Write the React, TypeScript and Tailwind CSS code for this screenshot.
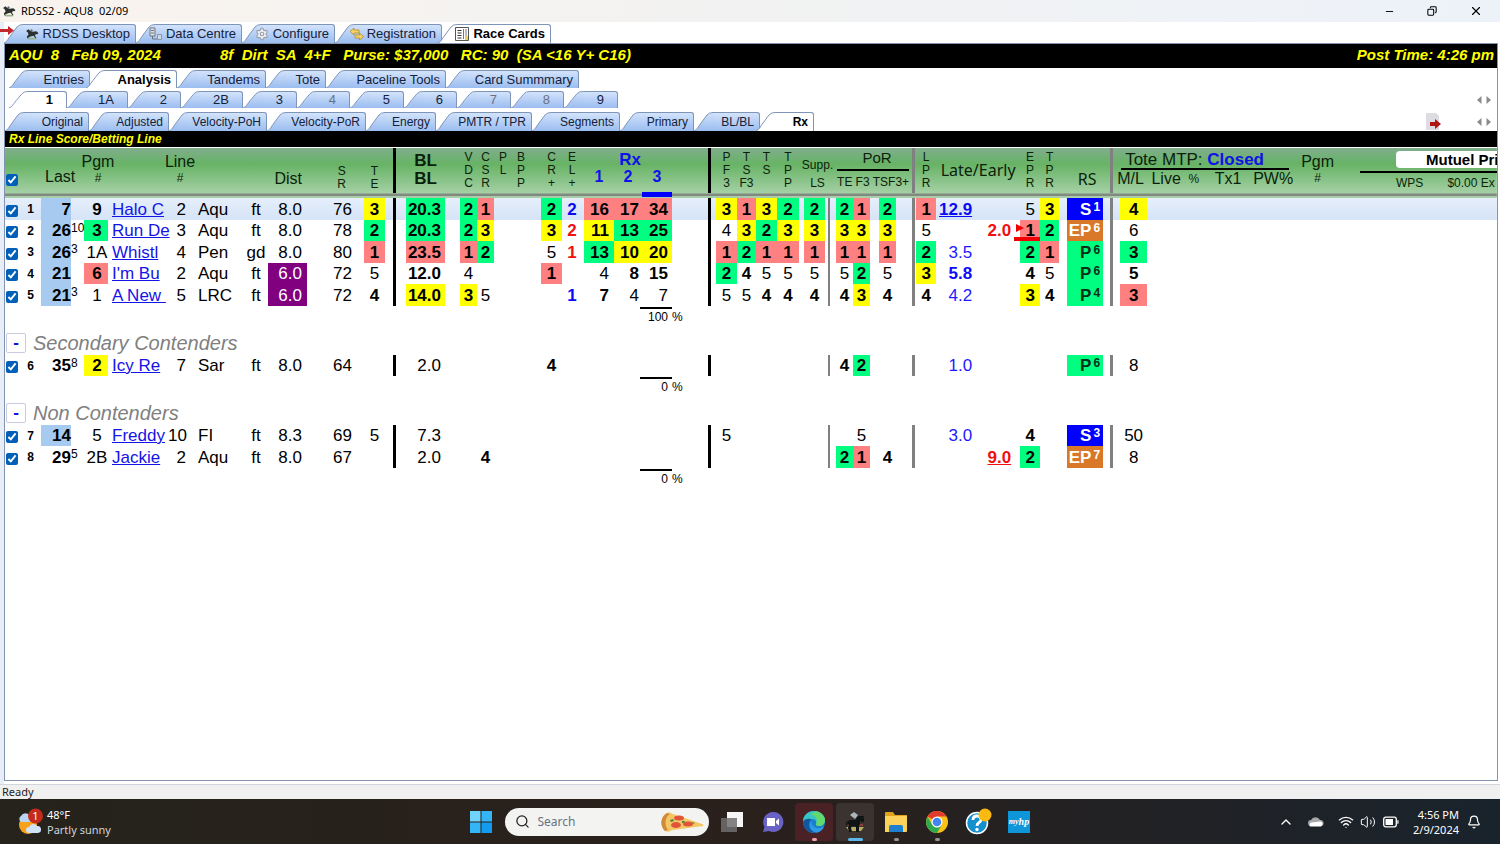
import React from 'react';
import { FaHorse } from 'react-icons/fa';
import { Bell, ChevronUp, Copy, Minus, Search, Settings, Volume2, Wifi, X } from 'lucide-react';

/* ---------- tabs ---------- */

interface TabItem {
  label: string;
  width: string;
  icon?: React.ReactNode;
  muted?: boolean;
}

interface TabProps extends TabItem {
  selected: boolean;
  look: string;
}

const Tab: React.FC<TabProps> = ({ label, width, icon, muted, selected, look }) => {
  return (
    <button
      role="tab"
      aria-selected={selected}
      className={`relative flex h-full shrink-0 ${width} ${
        selected ? 'z-10 -ml-1 first:ml-0' : ''
      }`}
    >
      <svg viewBox="0 0 20 19" preserveAspectRatio="none" className="h-full w-5 shrink-0">
        <defs>
          <linearGradient id="tabFill" x1="0" y1="0" x2="0" y2="19" gradientUnits="userSpaceOnUse">
            <stop offset="0" stopColor="#d3e3fb" />
            <stop offset="1" stopColor="#9bbdf0" />
          </linearGradient>
        </defs>
        <path
          d="M0 19 C3 18 4 15 7 11 L13 3 Q15 .5 19 .5 L20 .5 V19 Z"
          fill={selected ? '#ffffff' : 'url(#tabFill)'}
        />
        <path
          d="M0 19 C3 18 4 15 7 11 L13 3 Q15 .5 19 .5 L20 .5"
          fill="none"
          stroke="#7f95b8"
        />
      </svg>
      <span
        className={`flex h-full min-w-0 grow items-center justify-end gap-[2px] rounded-tr-[3px] border-t border-r border-[#7f95b8] whitespace-nowrap ${look} ${
          selected ? 'bg-white font-bold text-black' : 'bg-linear-to-b from-[#d3e3fb] to-[#9bbdf0]'
        } ${muted ? 'text-gray-500' : ''}`}
      >
        {icon && <span className="shrink-0">{icon}</span>}
        {label}
      </span>
    </button>
  );
};

interface TabRowProps {
  items: TabItem[];
  active: string;
  look: string;
  className: string;
  children?: React.ReactNode;
}

const TabRow: React.FC<TabRowProps> = ({ items, active, look, className, children }) => {
  return (
    <div role="tablist" className={`flex overflow-hidden text-[#14213a] ${className}`}>
      {items.map((item) => (
        <Tab key={item.label} {...item} selected={item.label === active} look={look} />
      ))}
      {children}
    </div>
  );
};

const ScrollArrows = () => {
  return (
    <svg viewBox="0 0 14 8" className="h-2 w-3.5" fill="#8b8b8b">
      <path d="M4.500 0v8L0 4z" />
      <path d="M9.500 0v8L14 4z" />
    </svg>
  );
};

const HorseIcon = ({ className }: { className: string }) => {
  return (
    <svg viewBox="0 0 16 14" className={className}>
      <path d="M3 11.500h11l-2 2H4z" fill="#9db58a" />
      <path
        d="M1 3.500 4 1.500l2 2 3 .8 4-.5 2.500 2-1 1.500-2-.3-1 2 1.500 2.500-1 .5-2-3-3 .5-3.500 1.500.5 1-1.300.2L2 10l2-2.500L3 5z"
        fill="#2c302f"
      />
      <path d="M5.500 2.500l2-1 1.500 1-1 1.500z" fill="#5c6b78" />
    </svg>
  );
};

const DataIcon = () => {
  return (
    <svg viewBox="0 0 16 14" className="h-3.5 w-4">
      <path d="M2 1h5v8H2z" fill="#dfe3e8" stroke="#6c7681" />
      <path d="M3 3.500h3M3 6h3" stroke="#6c7681" />
      <path d="M4.500 9v3H9" fill="none" stroke="#6c7681" />
      <path d="M9.500 7.500h4v5h-4z" fill="#cfd9e6" stroke="#8a97a5" />
    </svg>
  );
};

const KeyIcon = () => {
  return (
    <svg viewBox="0 0 16 14" className="h-3.5 w-4">
      <path
        d="M1 4.500 5 1v2h5v3H5v2zM14.500 9.500l-4-3.500v2H6v3h4.500v2z"
        fill="#f6d36b"
        stroke="#b88a1c"
        strokeWidth=".8"
      />
    </svg>
  );
};

const CardsIcon = () => {
  return (
    <svg viewBox="0 0 14 14" className="mr-[2px] h-3.5 w-3.5">
      <path d="M.5.5h13v13H.5z" fill="#fff" stroke="#555" />
      <path d="M2.500 3.500h4M2.500 6h4M2.500 8.500h4M2.500 11h4" stroke="#333" />
      <path d="M8.500 2v10M11 2v7" stroke="#777" />
      <path d="M10 9h3v4h-3z" fill="#e7cf6a" />
    </svg>
  );
};

const MainTabs: TabItem[] = [
  { label: 'RDSS Desktop', width: 'w-[132px]', icon: <HorseIcon className="mr-[2px] h-3 w-3.5" /> },
  { label: 'Data Centre', width: 'w-[106px]', icon: <DataIcon /> },
  {
    label: 'Configure',
    width: 'w-[93px]',
    icon: <Settings size={14} fill="#f1f1f1" className="mr-[2px] text-gray-400" />,
  },
  { label: 'Registration', width: 'w-[107px]', icon: <KeyIcon /> },
  { label: 'Race Cards', width: 'w-[113px]', icon: <CardsIcon /> },
];

const SectionTabs: TabItem[] = [
  { label: 'Entries', width: 'w-[81px]' },
  { label: 'Analysis', width: 'w-[91px]' },
  { label: 'Tandems', width: 'w-[89px]' },
  { label: 'Tote', width: 'w-[60px]' },
  { label: 'Paceline Tools', width: 'w-[120px]' },
  { label: 'Card Summmary', width: 'w-[133px]' },
];

const HorseTabs: TabItem[] = [
  { label: '1', width: 'w-[58px]' },
  { label: '1A', width: 'w-[61px]' },
  { label: '2', width: 'w-[53px]' },
  { label: '2B', width: 'w-[62px]' },
  { label: '3', width: 'w-[54px]' },
  { label: '4', width: 'w-[53px]', muted: true },
  { label: '5', width: 'w-[54px]' },
  { label: '6', width: 'w-[53px]' },
  { label: '7', width: 'w-[54px]', muted: true },
  { label: '8', width: 'w-[53px]', muted: true },
  { label: '9', width: 'w-[54px]' },
];

const ViewTabs: TabItem[] = [
  { label: 'Original', width: 'w-[84px]' },
  { label: 'Adjusted', width: 'w-[80px]' },
  { label: 'Velocity-PoH', width: 'w-[98px]' },
  { label: 'Velocity-PoR', width: 'w-[99px]' },
  { label: 'Energy', width: 'w-[70px]' },
  { label: 'PMTR / TPR', width: 'w-[96px]' },
  { label: 'Segments', width: 'w-[88px]' },
  { label: 'Primary', width: 'w-[74px]' },
  { label: 'BL/BL', width: 'w-[66px]' },
  { label: 'Rx', width: 'w-[58px]' },
];

/* ---------- table data ---------- */

interface Mark {
  v: string;
  cls: string;
}
type Cell = string | Mark;

const b = (v: string): Mark => ({ v, cls: 'font-bold' });
const y = (v: string): Mark => ({ v, cls: 'font-bold bg-[#ffff00]' });
const g = (v: string): Mark => ({ v, cls: 'font-bold bg-[#00ff80]' });
const r = (v: string): Mark => ({ v, cls: 'font-bold bg-[#ff8080]' });
const blue = (v: string): Mark => ({ v, cls: 'text-[#1a1aff]' });
const boldBlue = (v: string): Mark => ({ v, cls: 'font-bold text-[#0a0af5]' });
const red = (v: string): Mark => ({ v, cls: 'font-bold text-[#f01010]' });
const recent = (v: string): Mark => ({ v, cls: 'font-bold bg-[#a6caf0]' });
const sprint = (v: string): Mark => ({ v, cls: 'bg-[#800080] text-white' });

interface Horse {
  n: string;
  name: string;
  rs: [string, string];
  cells: Record<string, Cell>;
}

const Contenders: Horse[] = [
  {
    n: '1',
    name: 'Halo C',
    rs: ['S', '1'],
    cells: {
      last: recent('7'), pgm: b('9'), line: '2', track: 'Aqu', cond: 'ft', dist: '8.0', sr: '76', te: y('3'),
      bl: g('20.3'), vdc: g('2'), csr: r('1'), cr: g('2'), el: boldBlue('2'),
      rx1: r('16'), rx2: r('17'), rx3: r('34'),
      pf3: y('3'), tsf3: r('1'), ts: y('3'), tpp: g('2'), supp: g('2'),
      porTe: g('2'), porF3: r('1'), porTs: g('2'), lpr: r('1'),
      late: { v: '12.9', cls: 'font-bold text-[#0a0af5] underline' },
      epr: '5', tpr: y('3'), ml: y('4'),
    },
  },
  {
    n: '2',
    name: 'Run De',
    rs: ['EP', '6'],
    cells: {
      last: recent('26'), sup: '10', pgm: g('3'), line: '3', track: 'Aqu', cond: 'ft', dist: '8.0', sr: '78', te: g('2'),
      bl: g('20.3'), vdc: g('2'), csr: y('3'), cr: y('3'), el: red('2'),
      rx1: y('11'), rx2: g('13'), rx3: g('25'),
      pf3: '4', tsf3: y('3'), ts: g('2'), tpp: y('3'), supp: y('3'),
      porTe: y('3'), porF3: y('3'), porTs: y('3'), lpr: '5', early: red('2.0'),
      epr: r('1'), tpr: g('2'), ml: '6',
    },
  },
  {
    n: '3',
    name: 'Whistl',
    rs: ['P', '6'],
    cells: {
      last: recent('26'), sup: '3', pgm: '1A', line: '4', track: 'Pen', cond: 'gd', dist: '8.0', sr: '80', te: r('1'),
      bl: r('23.5'), vdc: r('1'), csr: g('2'), cr: '5', el: red('1'),
      rx1: g('13'), rx2: y('10'), rx3: y('20'),
      pf3: r('1'), tsf3: g('2'), ts: r('1'), tpp: r('1'), supp: r('1'),
      porTe: r('1'), porF3: r('1'), porTs: r('1'), lpr: g('2'), late: blue('3.5'),
      epr: g('2'), tpr: r('1'), ml: g('3'),
    },
  },
  {
    n: '4',
    name: "I'm Bu",
    rs: ['P', '6'],
    cells: {
      last: recent('21'), pgm: r('6'), line: '2', track: 'Aqu', cond: 'ft', dist: sprint('6.0'), sr: '72', te: '5',
      bl: b('12.0'), vdc: '4', cr: r('1'),
      rx1: '4', rx2: b('8'), rx3: b('15'),
      pf3: g('2'), tsf3: b('4'), ts: '5', tpp: '5', supp: '5',
      porTe: '5', porF3: g('2'), porTs: '5', lpr: y('3'), late: boldBlue('5.8'),
      epr: b('4'), tpr: '5', ml: b('5'),
    },
  },
  {
    n: '5',
    name: 'A New ',
    rs: ['P', '4'],
    cells: {
      last: recent('21'), sup: '3', pgm: '1', line: '5', track: 'LRC', cond: 'ft', dist: sprint('6.0'), sr: '72', te: b('4'),
      bl: y('14.0'), vdc: y('3'), csr: '5', el: boldBlue('1'),
      rx1: b('7'), rx2: '4', rx3: '7',
      pf3: '5', tsf3: '5', ts: b('4'), tpp: b('4'), supp: b('4'),
      porTe: b('4'), porF3: y('3'), porTs: b('4'), lpr: b('4'), late: blue('4.2'),
      epr: y('3'), tpr: b('4'), ml: r('3'),
    },
  },
];

const Secondary: Horse[] = [
  {
    n: '6',
    name: 'Icy Re',
    rs: ['P', '6'],
    cells: {
      last: b('35'), sup: '8', pgm: y('2'), line: '7', track: 'Sar', cond: 'ft', dist: '8.0', sr: '64',
      bl: '2.0', cr: b('4'), porTe: b('4'), porF3: g('2'), late: blue('1.0'), ml: '8',
    },
  },
];

const NonContenders: Horse[] = [
  {
    n: '7',
    name: 'Freddy',
    rs: ['S', '3'],
    cells: {
      last: recent('14'), pgm: '5', line: '10', track: 'FI', cond: 'ft', dist: '8.3', sr: '69', te: '5',
      bl: '7.3', pf3: '5', porF3: '5', late: blue('3.0'), epr: b('4'), ml: '50',
    },
  },
  {
    n: '8',
    name: 'Jackie',
    rs: ['EP', '7'],
    cells: {
      last: b('29'), sup: '5', pgm: '2B', line: '2', track: 'Aqu', cond: 'ft', dist: '8.0', sr: '67',
      bl: '2.0', csr: b('4'), porTe: g('2'), porF3: r('1'), porTs: b('4'),
      early: { v: '9.0', cls: 'font-bold text-[#f01010] underline' },
      epr: g('2'), ml: '8',
    },
  },
];

// one entry per table column, "gap" and "bar" columns carry no data
interface Column {
  key: string;
  w: string;
  cls?: string;
}

const Columns: Column[] = [
  { key: 'check', w: 'w-[15px]' },
  { key: 'n', w: 'w-[21px]' },
  { key: 'last', w: 'w-[30px]', cls: 'text-right' },
  { key: 'sup', w: 'w-[13px]', cls: 'align-top text-xs' },
  { key: 'pgm', w: 'w-[24px]', cls: 'text-center pl-[2px]' },
  { key: 'name', w: 'w-[60px]', cls: 'pl-1' },
  { key: 'line', w: 'w-[20px]', cls: 'text-right pr-[2px]' },
  { key: 'track', w: 'w-[58px]', cls: 'pl-[10px]' },
  { key: 'cond', w: 'w-[22px]', cls: 'text-center pr-[2px]' },
  { key: 'dist', w: 'w-[39px]', cls: 'text-right pr-[5px]' },
  { key: 'sr', w: 'w-[57px]', cls: 'text-right pr-3' },
  { key: 'te', w: 'w-[21px]', cls: 'text-center' },
  { key: 'gap', w: 'w-[8px]' },
  { key: 'bar', w: 'w-[3px]', cls: 'bg-black' },
  { key: 'gap', w: 'w-[10px]' },
  { key: 'bl', w: 'w-[39px]', cls: 'text-right pr-1' },
  { key: 'gap', w: 'w-[15px]' },
  { key: 'vdc', w: 'w-[17px]', cls: 'text-center' },
  { key: 'csr', w: 'w-[17px]', cls: 'text-center' },
  { key: 'pl', w: 'w-[18px]' },
  { key: 'bpp', w: 'w-[18px]' },
  { key: 'gap', w: 'w-[11px]' },
  { key: 'cr', w: 'w-[21px]', cls: 'text-center' },
  { key: 'el', w: 'w-[20px]', cls: 'text-center' },
  { key: 'gap', w: 'w-[2px]' },
  { key: 'rx1', w: 'w-[30px]', cls: 'text-right pr-[5px]' },
  { key: 'rx2', w: 'w-[28px]', cls: 'text-right pr-[3px]' },
  { key: 'rx3', w: 'w-[30px]', cls: 'text-right pr-1' },
  { key: 'gap', w: 'w-[36px]' },
  { key: 'bar', w: 'w-[3px]', cls: 'bg-black' },
  { key: 'gap', w: 'w-[5px]' },
  { key: 'pf3', w: 'w-[21px]', cls: 'text-center' },
  { key: 'tsf3', w: 'w-[19px]', cls: 'text-center' },
  { key: 'ts', w: 'w-[21px]', cls: 'text-center' },
  { key: 'tpp', w: 'w-[22px]', cls: 'text-center' },
  { key: 'gap', w: 'w-[5px]' },
  { key: 'supp', w: 'w-[21px]', cls: 'text-center' },
  { key: 'gap', w: 'w-[3px]' },
  { key: 'bar', w: 'w-[2px]', cls: 'bg-[#808080]' },
  { key: 'gap', w: 'w-[6px]' },
  { key: 'porTe', w: 'w-[17px]', cls: 'text-center' },
  { key: 'porF3', w: 'w-[17px]', cls: 'text-center' },
  { key: 'gap', w: 'w-[9px]' },
  { key: 'porTs', w: 'w-[17px]', cls: 'text-center' },
  { key: 'gap', w: 'w-[16px]' },
  { key: 'bar', w: 'w-[3px]', cls: 'bg-[#808080]' },
  { key: 'gap', w: 'w-[1px]' },
  { key: 'lpr', w: 'w-[20px]', cls: 'text-center' },
  { key: 'late', w: 'w-[40px]', cls: 'text-right pr-1' },
  { key: 'early', w: 'w-[44px]', cls: 'text-right pr-[9px]' },
  { key: 'epr', w: 'w-[20px]', cls: 'text-center' },
  { key: 'tpr', w: 'w-[19px]', cls: 'text-center' },
  { key: 'gap', w: 'w-[8px]' },
  { key: 'rs', w: 'w-[36px]' },
  { key: 'gap', w: 'w-[7px]' },
  { key: 'bar', w: 'w-[3px]', cls: 'bg-[#808080]' },
  { key: 'gap', w: 'w-[7px]' },
  { key: 'ml', w: 'w-[27px]', cls: 'text-center' },
  { key: 'gap', w: '' },
];

const StyleColors: Record<string, string> = {
  S: 'bg-[#0000ff] text-white',
  EP: 'bg-[#d87828] text-white',
  P: 'bg-[#00ff80] text-[#06301a]',
};

const HorseRow = ({ horse, first }: { horse: Horse; first?: boolean }) => {
  return (
    <tr
      className={`h-[22px] even:h-[21px] ${first ? 'bg-linear-to-b from-[#e6effb] to-[#d5e4f7]' : ''}`}
    >
      {Columns.map((col, index) => {
        if (col.key === 'check') {
          return (
            <td key={index}>
              <input
                type="checkbox"
                defaultChecked
                aria-label={horse.name.trim()}
                className="mt-[3px] ml-px block h-3 w-3 accent-[#005fb8]"
              />
            </td>
          );
        }
        if (col.key === 'n') {
          return (
            <td key={index} className="text-center text-xs leading-5 font-bold">
              {horse.n}
            </td>
          );
        }
        if (col.key === 'name') {
          return (
            <td key={index} className={col.cls}>
              <a href="#" className="whitespace-pre text-[#1414e6] underline">
                {horse.name}
              </a>
            </td>
          );
        }
        if (col.key === 'rs') {
          return (
            <td
              key={index}
              className={`pr-[3px] text-right font-bold whitespace-nowrap ${StyleColors[horse.rs[0]]}`}
            >
              {horse.rs[0]}
              <span className="ml-[2px] inline-block align-top text-xs leading-4">{horse.rs[1]}</span>
            </td>
          );
        }
        const cell = horse.cells[col.key];
        const value = typeof cell === 'string' ? cell : cell?.v;
        const mark = typeof cell === 'object' ? cell.cls : '';
        return (
          <td key={index} className={`${col.cls ?? ''} ${mark}`}>
            {col.key === 'epr' && horse.n === '2' ? (
              // red flag on the early speed leader
              <div className="relative">
                {value}
                <svg viewBox="0 0 8 8" className="absolute top-1 -left-1 h-2 w-2" fill="#f00000">
                  <path d="M0 0l8 4-8 4z" />
                </svg>
                <div className="absolute bottom-0 -left-1.5 h-1 w-[26px] bg-[#f00000]" />
              </div>
            ) : (
              value
            )}
          </td>
        );
      })}
    </tr>
  );
};

const TotalRow = ({ total }: { total: string }) => {
  return (
    <tr className="h-[25px]">
      <td colSpan={27} />
      <td colSpan={2} className="pt-px align-top text-xs leading-[17px]">
        <div className="-ml-[2px] flex">
          <span className="w-8 border-t-2 border-black pr-1 text-right">{total}</span>
          <span className="pt-[2px]">%</span>
        </div>
      </td>
      <td colSpan={30} />
    </tr>
  );
};

const GroupRow = ({ title }: { title: string }) => {
  return (
    <tr className="h-6">
      <td colSpan={59}>
        <div className="flex items-center gap-[7px] pl-px">
          <button className="h-5 w-5 rounded-xs border border-[#c8cce0] bg-white text-center leading-4 font-bold text-[#1010f0]">
            -
          </button>
          <h2 className="text-xl leading-6 text-[#808080] italic">{title}</h2>
        </div>
      </td>
    </tr>
  );
};

/* ---------- table heading ---------- */

const Stack = ({ text, low }: { text: string[]; low?: boolean }) => {
  return (
    <div className={`flex flex-col items-center text-xs leading-[13px] ${low ? 'pt-[17px]' : 'pt-[3px]'}`}>
      {text.map((t, index) => (
        <span key={index}>{t}</span>
      ))}
    </div>
  );
};

const Numbered = ({ text }: { text: string }) => {
  return (
    <div className="flex flex-col items-center pt-[6px] text-base leading-4">
      <span>{text}</span>
      <span className="text-xs leading-4">#</span>
    </div>
  );
};

const Divider = ({ color }: { color: string }) => {
  return (
    <th>
      <div className={`h-[45px] ${color}`} />
    </th>
  );
};

const TableHead = () => {
  return (
    <thead>
      <tr className="h-[50px] bg-[linear-gradient(to_bottom,#80ad8c_0px,#67b365_16px,#a5d0a5_45px,#808a80_46px,#808a80_48px,#a9cda9_48px,#a9cda9_50px)] align-top text-[#0b1f0b] [&>th]:p-0 [&>th]:font-normal">
        <th colSpan={2}>
          <input
            type="checkbox"
            defaultChecked
            aria-label="Select all"
            className="mt-[26px] ml-px block h-3 w-3 accent-[#005fb8]"
          />
        </th>
        <th colSpan={2} className="text-left">
          <div className="pt-[21px] pl-1 text-base leading-4">Last</div>
        </th>
        <th>
          <div className="-mr-1">
            <Numbered text="Pgm" />
          </div>
        </th>
        <th />
        <th>
          <div className="pl-1">
            <Numbered text="Line" />
          </div>
        </th>
        <th colSpan={2} />
        <th>
          <div className="pt-[23px] pr-[5px] text-right text-base leading-4">Dist</div>
        </th>
        <th>
          <div className="flex justify-end pr-[18px]">
            <Stack text={['S', 'R']} low />
          </div>
        </th>
        <th>
          <Stack text={['T', 'E']} low />
        </th>
        <th />
        <Divider color="bg-black" />
        <th />
        <th>
          <div className="pt-1 text-center leading-[18px] font-bold">
            BL
            <br />
            BL
          </div>
        </th>
        <th />
        <th><Stack text={['V', 'D', 'C']} /></th>
        <th><Stack text={['C', 'S', 'R']} /></th>
        <th><Stack text={['P', 'L']} /></th>
        <th><Stack text={['B', 'P', 'P']} /></th>
        <th />
        <th><Stack text={['C', 'R', '+']} /></th>
        <th><Stack text={['E', 'L', '+']} /></th>
        <th />
        <th colSpan={3}>
          <div className="pt-[3px] text-center font-bold text-[#1010e8]">
            <div className="pl-1 leading-[17px]">Rx</div>
            <div className="flex text-base leading-[18px]">
              <span className="w-[30px]">1</span>
              <span className="w-[28px]">2</span>
              <span className="h-[29px] w-[30px] border-b-[5px] border-[#0000ff]">3</span>
            </div>
          </div>
        </th>
        <th />
        <Divider color="bg-black" />
        <th />
        <th><Stack text={['P', 'F', '3']} /></th>
        <th><Stack text={['T', 'S', 'F3']} /></th>
        <th><Stack text={['T', 'S']} /></th>
        <th><Stack text={['T', 'P', 'P']} /></th>
        <th colSpan={3}>
          <div className="flex flex-col items-center pt-2 pl-2 text-xs leading-[18px]">
            <span>Supp.</span>
            <span>LS</span>
          </div>
        </th>
        <th colSpan={7}>
          <div className="flex flex-col pt-[2px] pr-[3px] pl-[9px] text-xs leading-4">
            <span className="border-b-2 border-black pb-[3px] pl-2 text-center text-[15px]">PoR</span>
            <span className="flex justify-between pt-[3px]">
              <span>TE</span>
              <span>F3</span>
              <span>TSF3+</span>
            </span>
          </div>
        </th>
        <Divider color="bg-[#808080]" />
        <th />
        <th><Stack text={['L', 'P', 'R']} /></th>
        <th colSpan={2}>
          <div className="pt-[14px] text-center font-['Noto_Sans',sans-serif] text-base leading-4">
            Late/Early
          </div>
        </th>
        <th><Stack text={['E', 'P', 'R']} /></th>
        <th><Stack text={['T', 'P', 'R']} /></th>
        <th />
        <th>
          <div className="pt-[23px] pl-1 text-center font-['Noto_Sans',sans-serif] text-base leading-4">RS</div>
        </th>
        <th />
        <Divider color="bg-[#808080]" />
        <th colSpan={3} className="text-left">
          <div className="flex overflow-hidden text-base">
            <div className="ml-1 w-[176px] shrink-0 pt-[3px] whitespace-nowrap">
              <div className="mx-1 border-b-2 border-black pl-1 text-[17px] leading-[17px]">
                Tote MTP: <span className="font-bold text-[#1010e8]">Closed</span>
              </div>
              <div className="flex items-center justify-between leading-[18px]">
                <span>M/L</span>
                <span>Live</span>
                <span className="text-xs">%</span>
                <span className="pl-2">Tx1</span>
                <span className="pl-1">PW%</span>
              </div>
            </div>
            <div className="ml-2 shrink-0">
              <Numbered text="Pgm" />
            </div>
            <div className="ml-[26px] grow overflow-hidden pt-[3px] whitespace-nowrap">
              <div className="border-b-2 border-black pb-[3px] pl-9">
                <div className="overflow-hidden rounded-l-sm bg-white pl-[30px] text-[15px] leading-[17px] font-bold text-black">
                  Mutuel Pri
                </div>
              </div>
              <div className="flex gap-6 pt-[2px] pl-9 text-xs leading-4">
                <span>WPS</span>
                <span>$0.00 Ex</span>
              </div>
            </div>
          </div>
        </th>
      </tr>
    </thead>
  );
};

/* ---------- taskbar ---------- */

const EdgeIcon = () => {
  return (
    <svg viewBox="0 0 24 24" className="h-6 w-6">
      <circle cx="12" cy="12" r="11" fill="#1b7fd0" />
      <path d="M1 12C1 5 6 1 12 1c7 0 11 5 11 9 0 4-3 6-6 6-2 0-3.500-1-3-2 1-2 0-5-4-5-4 0-8 1-9 3z" fill="#39c6c0" />
      <path d="M14 1.200c5 1 9 4.800 9 8.800 0 4-3 6-6 6-2 0-3.500-1-3-2 2-3 1-8-5-10z" fill="#63d86c" />
      <path d="M8 11c-3 4 0 11 7 11.500C8 24 1 19 1 12c1-3 5-4 8-3z" fill="#1256a0" />
      <path d="M10 10c-2 4 2 9 8 8 2-.3 3-1 4-1.500-1 3-4 5.500-7 6C8 22 6 15 10 10z" fill="#2f9be6" />
    </svg>
  );
};

const ChromeIcon = () => {
  return (
    <svg viewBox="0 0 24 24" className="h-6 w-6">
      <circle cx="12" cy="12" r="11" fill="#fbc116" />
      <path d="M12 12 2.500 6.500A11 11 0 0 1 21.500 6.500H12z" fill="#e33b2e" />
      <path d="M2.500 6.500A11 11 0 0 0 12 23l4.800-8.300L12 12 7.200 14.700z" fill="#2da94f" />
      <circle cx="12" cy="12" r="5.500" fill="#fff" />
      <circle cx="12" cy="12" r="4.300" fill="#4285f4" />
    </svg>
  );
};

const PizzaIcon = () => {
  return (
    <svg viewBox="0 0 46 22" className="h-[22px] w-[46px]">
      <path d="M8 2C2 5 0 14 6 20c4 2 6-1 8-1l30-4c1-1 0-2-1-2L14 3c-2-1-4-2-6-1z" fill="#f4c766" />
      <path d="M8 2C2 5 0 14 6 20l3-1C5 14 6 6 11 3z" fill="#cf8a3a" />
      <ellipse cx="17" cy="14" rx="5" ry="3" fill="#e2543a" />
      <ellipse cx="20" cy="7" rx="5" ry="2.500" fill="#e2543a" />
      <ellipse cx="29" cy="13" rx="5" ry="2.500" fill="#e2543a" />
      <path d="M11 9l3-1 1 2-3 1zM23 10l3 0-1 2-2 0zM33 11l3 1-2 1z" fill="#4a8a3a" />
    </svg>
  );
};

const WeatherIcon = () => {
  return (
    <svg viewBox="0 0 26 28" className="h-7 w-[26px]">
      <circle cx="11" cy="17" r="9" fill="#f9a11b" />
      <path d="M4 14a3.500 3.500 0 0 1 0-6 5 5 0 0 1 9 0 3 3 0 0 1 0 6z" fill="#b9d4f3" />
      <path d="M12 25a3 3 0 0 1 0-6 4.500 4.500 0 0 1 8-1 3.500 3.500 0 0 1 1 7z" fill="#cfe2f8" />
      <circle cx="18.500" cy="8" r="7.500" fill="#c42b1c" />
      <text x="18.500" y="12" textAnchor="middle" fontSize="11" fill="#fff">
        1
      </text>
    </svg>
  );
};

const BatteryIcon = () => {
  return (
    <svg viewBox="0 0 16 12" className="ml-[7px] h-3 w-4">
      <rect x=".7" y="1.200" width="12.600" height="9.600" rx="2" fill="none" stroke="#fff" strokeWidth="1.300" />
      <path d="M2.500 3h7.500v6H2.500z" fill="#fff" />
      <path d="M14.300 4.200h1.200v3.600h-1.200z" fill="#fff" />
    </svg>
  );
};

interface TaskButtonProps {
  label: string;
  tile?: string;
  mark?: string;
  children: React.ReactNode;
}

const TaskButton: React.FC<TaskButtonProps> = ({ label, tile, mark, children }) => {
  return (
    <div className="flex w-[41px] shrink-0 justify-center">
      <button
        aria-label={label}
        className={`relative flex h-[38px] w-[38px] items-center justify-center rounded ${tile ?? ''}`}
      >
        {children}
        {mark && <span className={`absolute bottom-0 h-[3px] rounded-full ${mark}`} />}
      </button>
    </div>
  );
};

const Taskbar = () => {
  return (
    <footer className="grid h-[45px] shrink-0 grid-cols-[1fr_auto_1fr] items-center bg-linear-to-r from-[#25231c] via-[#2a201c] to-[#19232c] font-['Noto_Sans',sans-serif] text-[11px] leading-[15px] text-white">
      <div className="flex items-center gap-1 pl-[17px]">
        <WeatherIcon />
        <div>
          <p>48°F</p>
          <p className="text-gray-300">Partly sunny</p>
        </div>
      </div>
      <div className="flex items-center">
        <TaskButton label="Start">
          <svg viewBox="0 0 22 22" className="h-[22px] w-[22px]" fill="#35b5f5">
            <path d="M0 0h10.500v10.500H0z" fill="#6fd3fb" />
            <path d="M11.500 0H22v10.500H11.500zM0 11.500h10.500V22H0z" />
            <path d="M11.500 11.500H22V22H11.500z" fill="#139bf0" />
          </svg>
        </TaskButton>
        <label className="mx-[3px] flex h-[28px] w-[204px] items-center gap-2 rounded-full bg-[#f3f3f1] pr-1 pl-2.5">
          <Search size={15} className="shrink-0 text-[#222]" />
          <input
            type="text"
            aria-label="Search"
            placeholder="Search"
            className="w-0 grow bg-transparent text-xs text-black placeholder:text-gray-500"
          />
          <PizzaIcon />
        </label>
        <TaskButton label="Task view">
          <svg viewBox="0 0 24 22" className="h-[22px] w-6">
            <path d="M7 1h16v15H7z" fill="#f5f5f5" />
            <path d="M1 7h16v14H1z" fill="#6f6f6f" fillOpacity=".85" />
          </svg>
        </TaskButton>
        <TaskButton label="Chat">
          <svg viewBox="0 0 22 22" className="h-[22px] w-[22px]">
            <path d="M11 1a10 10 0 1 1-4 19l-6 1 1.500-5A10 10 0 0 1 11 1z" fill="#6a61c4" />
            <path d="M5 7h8v8H5zM14 10l3-2.500v7L14 12z" fill="#fff" />
          </svg>
        </TaskButton>
        <TaskButton label="Edge" tile="bg-[#4a2226]" mark="w-[5px] bg-[#f2a3ac]">
          <EdgeIcon />
        </TaskButton>
        <TaskButton label="RDSS2" tile="bg-[#3a332f]" mark="w-[15px] bg-[#5cb8ea]">
          <svg viewBox="0 0 22 22" className="h-[22px] w-[22px]">
            <path d="M2 16h18l-3 4H5z" fill="#b8ad62" />
            <path d="M3 13h16v2H3z" fill="#8f3f3a" />
            <g transform="translate(2 4)">
              <FaHorse size={18} color="#0d1413" />
            </g>
            <path d="M6 4l4-3 4 3-3 4z" fill="#aeb7bf" />
          </svg>
        </TaskButton>
        <TaskButton label="File Explorer" mark="w-[5px] bg-[#9a9490]">
          <svg viewBox="0 0 24 22" className="h-[22px] w-6">
            <path d="M1 2q0-1 1-1h7l2 3h12v5H1z" fill="#e2a31c" />
            <path d="M1 5h22v15q0 1-1 1H1z" fill="#fbd35a" />
            <path d="M5 21v-5q0-2 2-2h10q2 0 2 2v5z" fill="#1c7fd0" />
          </svg>
        </TaskButton>
        <TaskButton label="Chrome" mark="w-[5px] bg-[#9a9490]">
          <ChromeIcon />
        </TaskButton>
        <TaskButton label="Help">
          <svg viewBox="0 0 28 28" className="h-7 w-7">
            <circle cx="13" cy="15" r="10.500" fill="#1590cf" stroke="#fff" strokeWidth="1.500" />
            <path d="M9 12q0-4 4-4t4 3.500q0 2-2.500 3.500-1.500 1-1.500 3" fill="none" stroke="#fff" strokeWidth="2.800" />
            <circle cx="13" cy="21.500" r="1.700" fill="#fff" />
            <circle cx="21" cy="7" r="6.500" fill="#fbb912" />
          </svg>
        </TaskButton>
        <TaskButton label="myHP">
          <span className="flex h-[22px] w-[22px] items-center justify-center overflow-hidden bg-[#0e96d8] font-['Liberation_Serif',serif] text-[10px] font-bold italic">
            <span className="text-[8px]">my</span>hp
          </span>
        </TaskButton>
      </div>
      <div className="flex items-center justify-end pr-[19px]">
        <ChevronUp size={16} />
        <svg viewBox="0 0 16 11" className="ml-[14px] h-[11px] w-4">
          <path d="M3 10a3 3 0 0 1 0-6 5 5 0 0 1 9 0 3 3 0 0 1 1 6z" fill="#a8a8a8" />
          <path d="M2 10.500a2.500 2.500 0 0 1 2-4l8-1a2.600 2.600 0 0 1 1 5z" fill="#fff" />
        </svg>
        <Wifi size={16} className="ml-[14px]" />
        <Volume2 size={16} strokeWidth={1.5} className="ml-[6px]" />
        <BatteryIcon />
        <div className="ml-[14px] text-right">
          <p>4:56 PM</p>
          <p>2/9/2024</p>
        </div>
        <Bell size={14} className="ml-2" />
      </div>
    </footer>
  );
};

/* ---------- page ---------- */

const App = () => {
  return (
    <div className="flex min-h-screen flex-col overflow-hidden bg-white font-['Liberation_Sans',Arial,sans-serif] text-[17px] text-black">
      {/* title bar */}
      <header className="flex h-[22px] shrink-0 items-center justify-between bg-linear-to-r from-[#f9f3ee] via-[#f2f2f2] to-[#edf2f9] pr-[17px] pl-[2px]">
        <div className="flex items-center gap-[5px]">
          <HorseIcon className="h-3 w-3.5" />
          <h1 className="font-['Noto_Sans',sans-serif] text-[11px] whitespace-pre">RDSS2 - AQU8  02/09</h1>
        </div>
        <div className="flex items-center gap-8">
          <button aria-label="Minimize"><Minus size={11} strokeWidth={2} /></button>
          <button aria-label="Restore"><Copy size={10} strokeWidth={2.5} className="-scale-x-100" /></button>
          <button aria-label="Close"><X size={14} strokeWidth={2} /></button>
        </div>
      </header>

      <main className="relative flex grow flex-col border-l-4 border-[#e8eef8] pr-[2px] pb-[3px]">
        <svg viewBox="0 0 14 9" className="absolute top-1 -left-1 z-20 h-[9px] w-3.5" fill="#c4272c">
          <path d="M0 3h8V0l6 4.500L8 9V6H0z" />
        </svg>
        <TabRow
          items={MainTabs}
          active="Race Cards"
          look="pr-[5px] text-[13px]"
          className="h-[21px] pt-[2px]"
        />
        <div className="flex grow flex-col border border-[#8493b0]">
          <div className="flex h-6 items-start justify-between bg-black pr-[3px] pl-1 text-[15px] leading-[22px] font-bold text-[#ffff00] italic">
            <div className="flex">
              <p className="w-[211px] whitespace-pre">AQU  8   Feb 09, 2024</p>
              <p className="whitespace-pre">8f  Dirt  SA  4+F   Purse: $37,000   RC: 90  (SA &lt;16 Y+ C16)</p>
            </div>
            <p>Post Time: 4:26 pm</p>
          </div>
          <TabRow
            items={SectionTabs}
            active="Analysis"
            look="pr-[5px] text-[13px]"
            className="h-5 pt-[2px] pl-1"
          />
          <TabRow
            items={HorseTabs}
            active="1"
            look="pr-[13px] text-[13px]"
            className="h-5 pt-[3px] pl-1"
          >
            <div className="ml-auto flex items-center pr-[6px]">
              <ScrollArrows />
            </div>
          </TabRow>
          <TabRow
            items={ViewTabs}
            active="Rx"
            look="pr-[5px] text-xs"
            className="h-[23px] pt-1"
          >
            <div className="ml-auto flex items-center gap-9 pr-[6px]">
              <svg viewBox="0 0 16 18" className="h-[18px] w-4">
                <path d="M1 0h10l3 3v14H1z" fill="#dcdce2" />
                <path d="M5 9h5V6l6 5-6 5v-3H5z" fill="#b01515" />
              </svg>
              <ScrollArrows />
            </div>
          </TabRow>
          <h2 className="mb-px h-4 bg-black pl-1 text-xs leading-4 font-bold text-[#ffff00] italic">
            Rx Line Score/Betting Line
          </h2>

          <table className="w-full table-fixed border-collapse leading-[21px]">
            <colgroup>
              {Columns.map((col, index) => (
                <col key={index} className={col.w} />
              ))}
            </colgroup>
            <TableHead />
            <tbody>
              {Contenders.map((horse, index) => (
                <HorseRow key={horse.n} horse={horse} first={index === 0} />
              ))}
              <TotalRow total="100" />
            </tbody>
            <tbody>
              <GroupRow title="Secondary Contenders" />
              {Secondary.map((horse) => (
                <HorseRow key={horse.n} horse={horse} />
              ))}
              <TotalRow total="0" />
            </tbody>
            <tbody>
              <GroupRow title="Non Contenders" />
              {NonContenders.map((horse) => (
                <HorseRow key={horse.n} horse={horse} />
              ))}
              <TotalRow total="0" />
            </tbody>
          </table>
        </div>
      </main>

      <div className="h-[15px] shrink-0 border-t border-gray-300 bg-[#f0f0f0] pl-[2px] font-['Noto_Sans',sans-serif] text-[11px] leading-[14px] text-[#222]">
        Ready
      </div>
      <Taskbar />
    </div>
  );
};

export default App;
